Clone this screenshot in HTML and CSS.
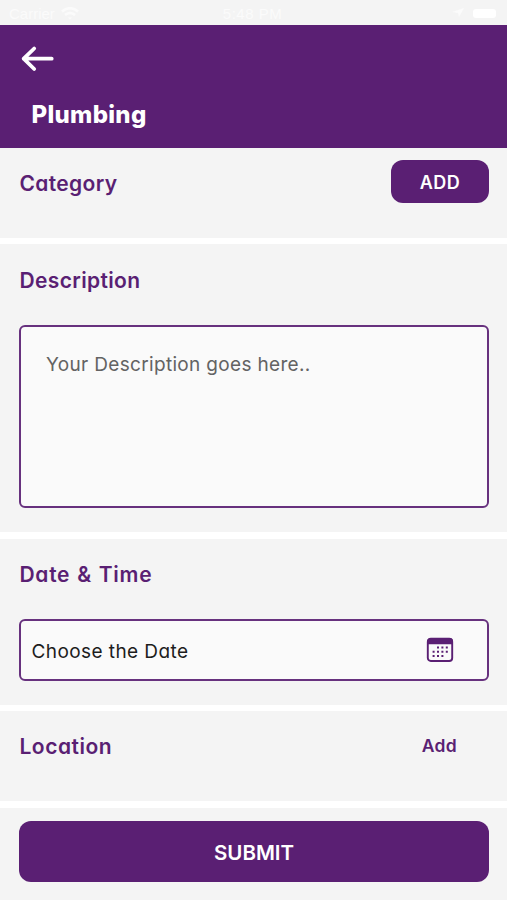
FILE: index.html
```html
<!DOCTYPE html>
<html lang="en">
<head>
<meta charset="utf-8">
<title>Plumbing</title>
<link rel="stylesheet" href="styles.css">
</head>
<body>
<div class="status">
  <div class="carrier"><span>Carrier</span>
    <svg width="18" height="13" viewBox="0 0 18 13" fill="none" stroke="currentColor" stroke-width="2.6"><path d="M1 4.5Q9-2 17 4.5M4 8q5-4 10 0"/><path d="M7 10.5h4l-2 2z" fill="currentColor" stroke="none"/></svg>
  </div>
  <span class="clock">5:48 PM</span>
  <div class="power">
    <svg width="14" height="10" viewBox="0 0 14 10" fill="currentColor"><path d="M0 4l12-4-5 9-1-4z"/></svg>
    <i class="battery"></i>
  </div>
</div>
<header class="header">
  <svg class="back" width="34" height="28" viewBox="0 0 34 28" fill="none" stroke="#fff" stroke-width="3.8" stroke-linecap="round" stroke-linejoin="round"><path d="M14.200 3.500 3.700 13.700 14.200 24M3.700 13.700h28"/></svg>
  <h1>Plumbing</h1>
</header>
<main>
  <section class="category">
    <h2 class="t-category">Category</h2>
    <button class="add">ADD</button>
  </section>
  <section class="description">
    <h2 class="t-description">Description</h2>
    <div class="field area"><span class="placeholder">Your Description goes here..</span></div>
  </section>
  <section class="datetime">
    <h2 class="t-date">Date &amp; Time</h2>
    <div class="field date"><span class="choose">Choose the Date</span>
      <svg width="28" height="26" viewBox="0 0 28 26"><rect x="1.800" y="1.800" width="24.400" height="22.200" rx="3" fill="none" stroke="#5a1f73" stroke-width="1.900"/><path d="M1 7.200V4.500Q1 1 4.500 1h19Q27 1 27 4.500v2.700z" fill="#5a1f73"/><path d="M11 10.500h12M6.600 14.800h16.500M6.600 19h12" fill="none" stroke="#5a1f73" stroke-width="2" stroke-dasharray="2 2.400"/></svg>
    </div>
  </section>
  <section class="location">
    <h2 class="t-location">Location</h2>
    <a class="link">Add</a>
  </section>
  <section class="footer"><button class="submit">SUBMIT</button></section>
</main>
</body>
</html>
```
FILE: styles.css
```css
* { box-sizing: border-box; }
body {
  margin: 0;
  height: 900px;
  overflow: hidden;
  background: #fff;
  color: #5a1f73;
  font-family: Inter, Lato, sans-serif;
  font-feature-settings: "cv11";
}
h1, h2 { margin: 0; white-space: nowrap; }
button { border: 0; padding: 0; background: #5a1f73; color: #fff; font-family: inherit; font-feature-settings: inherit; }
.status {
  height: 25px;
  padding: 1px 11px 0 9px;
  background: #f4f4f4;
  color: #fbfbfb;
  display: grid;
  grid-template-columns: 1fr auto 1fr;
  align-items: center;
  font: 15px "Liberation Sans", sans-serif;
}
.clock { letter-spacing: .5px; }
.carrier { display: flex; align-items: center; gap: 6px; }
.power { display: flex; align-items: center; justify-content: flex-end; gap: 7px; }
.battery { width: 23px; height: 9px; border-radius: 3px; background: #fff; }
.header { height: 122.500px; background: #5a1f73; padding: 20px 0 0 20px; color: #fff; }
.back { display: block; }
h1 { padding: 24px 0 0 11.500px; font-size: 24px; font-weight: 800; line-height: 36px; letter-spacing: .3px; }
main { display: flex; flex-direction: column; gap: 6.500px; }
section { background: #f4f4f4; padding: 0 18px 0 19px; }
h2 { font-size: 21px; font-weight: 600; line-height: 30px; letter-spacing: .35px; margin-left: .5px; }
.t-date { letter-spacing: .7px; word-spacing: 1px; }
.t-location { letter-spacing: .5px; }
.category { height: 90px; display: flex; justify-content: space-between; align-items: flex-start; padding-top: 12px; }
.category h2 { margin-top: 9px; }
.add { width: 98px; height: 43px; border-radius: 12px; font-size: 18px; font-weight: 600; letter-spacing: .5px; padding-top: 3px; }
.description { height: 288px; padding-top: 22px; }
.field { border: 2px solid #67317e; border-radius: 6px; background: #fafafa; }
.area { height: 183.500px; margin-top: 28.500px; padding: 24px 25px; color: #636363; }
.placeholder { font-size: 19px; line-height: 28px; letter-spacing: .33px; }
.datetime { height: 166px; padding-top: 21px; }
.date { height: 61.500px; margin-top: 29.500px; padding: 2px 33px 0 10.500px; display: flex; align-items: center; justify-content: space-between; color: #1d1d1d; }
.date svg { margin-top: -2px; }
.choose { font-size: 19px; letter-spacing: .42px; padding-top: 2px; }
.location { height: 90px; padding-top: 21px; display: flex; justify-content: space-between; align-items: flex-start; padding-right: 50px; }
.link { font-size: 17.500px; font-weight: 600; line-height: 28px; letter-spacing: .3px; }
.footer { height: 100px; padding-top: 13.500px; }
.submit { width: 100%; height: 61px; border-radius: 12px; font-size: 20.500px; font-weight: 600; padding-top: 2px; }
```
